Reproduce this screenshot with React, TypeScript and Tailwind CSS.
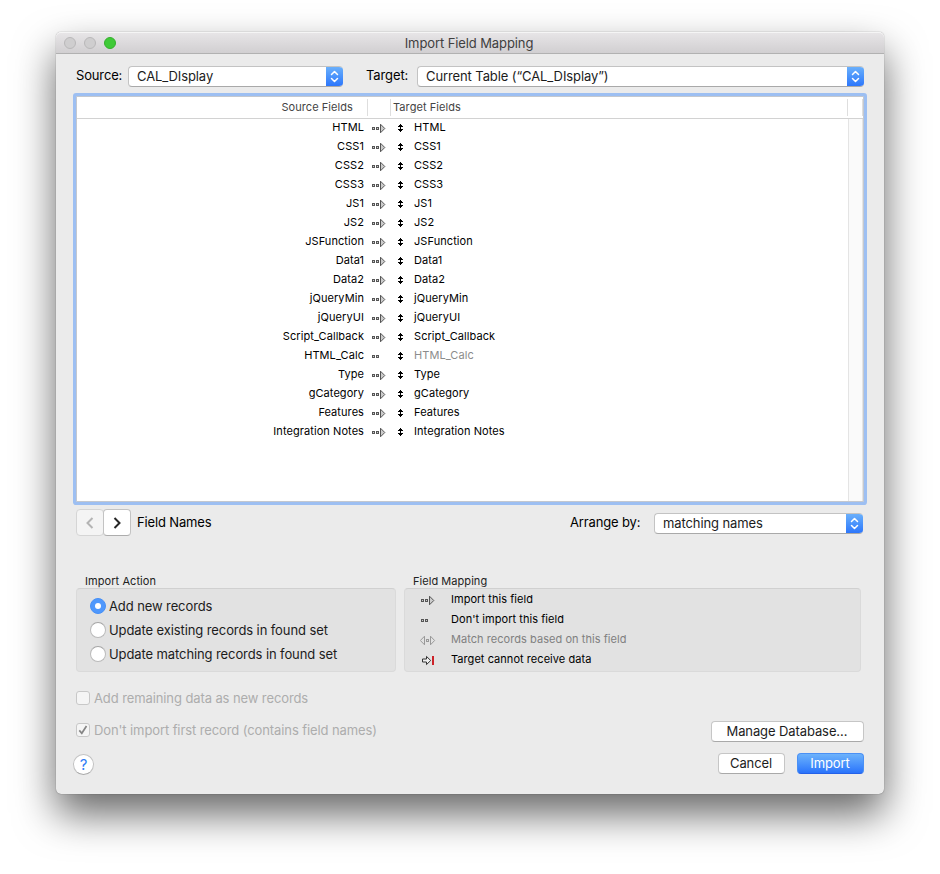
import clsx from "clsx";

type MappingKind = "import" | "skip" | "match" | "blocked";

const fields: { name: string; kind: MappingKind }[] = [
  { name: "HTML", kind: "import" },
  { name: "CSS1", kind: "import" },
  { name: "CSS2", kind: "import" },
  { name: "CSS3", kind: "import" },
  { name: "JS1", kind: "import" },
  { name: "JS2", kind: "import" },
  { name: "JSFunction", kind: "import" },
  { name: "Data1", kind: "import" },
  { name: "Data2", kind: "import" },
  { name: "jQueryMin", kind: "import" },
  { name: "jQueryUI", kind: "import" },
  { name: "Script_Callback", kind: "import" },
  { name: "HTML_Calc", kind: "skip" },
  { name: "Type", kind: "import" },
  { name: "gCategory", kind: "import" },
  { name: "Features", kind: "import" },
  { name: "Integration Notes", kind: "import" },
];

const legend: { label: string; kind: MappingKind; disabled?: boolean }[] = [
  { label: "Import this field", kind: "import" },
  { label: "Don't import this field", kind: "skip" },
  { label: "Match records based on this field", kind: "match", disabled: true },
  { label: "Target cannot receive data", kind: "blocked" },
];

const actions = [
  { label: "Add new records", checked: true },
  { label: "Update existing records in found set", checked: false },
  { label: "Update matching records in found set", checked: false },
];

function MappingIcon({ kind }: { kind: MappingKind }) {
  return (
    <svg width="16" height="11" viewBox="0 0 16 11" fill="none" className="block shrink-0">
      {(kind === "import" || kind === "skip") && (
        <g stroke="#555" fill="#ccc">
          <rect x="0.5" y="4.5" width="2" height="2" />
          <rect x="4.5" y="4.5" width="2" height="2" />
        </g>
      )}
      {kind === "import" && <path d="M8.5 1.2v8.6l4.3-4.3z" fill="#ccc" stroke="#555" />}
      {kind === "match" && (
        <g stroke="#999">
          <path d="M4.5 1.2v8.6L0.4 5.5z" />
          <rect x="6.5" y="4.5" width="2" height="2" />
          <path d="M10.5 1.2v8.6l4.1-4.3z" />
        </g>
      )}
      {kind === "blocked" && (
        <>
          <path d="M1.5 4h4V1.4l4.2 4.1-4.2 4.1V7h-4z" fill="#eee" stroke="#333" />
          <path d="M12 1v9" stroke="#cc2229" strokeWidth="2" />
        </>
      )}
    </svg>
  );
}

function SortHandle() {
  return (
    <svg width="5" height="8" viewBox="0 0 5 8" shapeRendering="crispEdges" className="block shrink-0">
      <path d="M2 0h1v1h1v1h1v1H3v2h2v1H4v1H3v1H2V7H1V6H0V5h2V3H0V2h1V1h1z" fill="#000" />
    </svg>
  );
}

function Select({ value, className }: { value: string; className?: string }) {
  return (
    <div
      className={clsx(
        "flex h-[21px] overflow-hidden rounded-[4px] border border-[#c3c3c3] border-b-[#a9a9a9] border-r-0 bg-white",
        className
      )}
    >
      <span className="flex-1 pl-2 leading-[19px] text-[#1c1c1c]">{value}</span>
      <span className="-my-px flex w-[17px] items-center justify-center bg-linear-to-b from-[#6db2fb] to-[#2a73fb]">
        <svg width="9" height="13" viewBox="0 0 9 13" fill="none" stroke="#fff" strokeWidth="1.5" strokeLinecap="round" strokeLinejoin="round">
          <path d="M1.5 4.5l3-3 3 3M1.5 8.5l3 3 3-3" />
        </svg>
      </span>
    </div>
  );
}

function PushButton({ label, primary, className }: { label: string; primary?: boolean; className?: string }) {
  return (
    <button
      className={clsx(
        "flex h-[21px] items-center justify-center rounded-[4px] border pb-[2px] pr-px",
        primary
          ? "border-[#4a90f5] border-b-[#2461e8] bg-linear-to-b from-[#6db2fb] to-[#2a73fb] text-white"
          : "border-[#c6c6c6] border-b-[#a9a9a9] bg-white text-[#1c1c1c]",
        className
      )}
    >
      {label}
    </button>
  );
}

function Checkbox({ label, checked }: { label: string; checked?: boolean }) {
  return (
    <div className="flex h-[14px] items-center gap-1 text-[#adadad]">
      <span className="flex size-[14px] items-center justify-center rounded-[3px] border border-[#c8c8c8] bg-[#f5f5f5]">
        {checked && (
          <svg width="10" height="10" viewBox="0 0 10 10" fill="none" stroke="#858585" strokeWidth="1.7">
            <path d="M1.3 5.4l2.5 2.9L8.5 1" />
          </svg>
        )}
      </span>
      <span>{label}</span>
    </div>
  );
}

export default function App() {
  return (
    <div className="h-[874px] w-[940px] overflow-hidden bg-white pl-14 pt-8 font-['Inter','Liberation_Sans',sans-serif] text-[13px] leading-4 tracking-[-0.1px] text-black">
      <div className="h-[762px] w-[828px] rounded-[5px] bg-[#ebebeb] shadow-[0_0_1px_rgba(0,0,0,0.6),0_20px_40px_rgba(0,0,0,0.6)]">
        <header className="relative flex h-[22px] items-center justify-center rounded-t-[5px] border-b border-[#b1b1b1] bg-linear-to-b from-[#e8e6e8] to-[#d1cfd1] text-[#404040] shadow-[inset_0_1px_0_#f5f5f5]">
          <div className="absolute left-2 top-[5px] flex gap-2">
            <span className="size-3 rounded-full border border-[#b9b8b9] bg-[#cfcecf]" />
            <span className="size-3 rounded-full border border-[#b9b8b9] bg-[#cfcecf]" />
            <span className="size-3 rounded-full border border-[#34b02c] bg-[#3fca37]" />
          </div>
          <h1 className="pr-[2px]">Import Field Mapping</h1>
        </header>

        <main className="px-5">
          <div className="flex pt-3">
            <span className="w-[52px] pt-px tracking-[-0.15px]">Source:</span>
            <Select value="CAL_DIsplay" className="w-[215px]" />
            <span className="ml-[23px] w-[51px] pt-px">Target:</span>
            <Select value="Current Table (“CAL_DIsplay”)" className="w-[447px]" />
          </div>

          {/* Field list */}
          <section className="mt-[9px] flex h-[406px] w-[788px] flex-col rounded-[1px] border border-[#c4c8cf] bg-white text-[11px] tracking-[0.07px] ring-3 ring-[#9dbff2]">
            <div className="flex h-[22px] border-b border-[#d2d2d2] leading-[20px] text-[#444]">
              <span className="w-[290px] pr-[14px] text-right">Source Fields</span>
              <span className="my-[2px] w-[24px] border-x border-[#dedede]" />
              <span className="flex-1 pl-[2px]">Target Fields</span>
              <span className="my-[2px] w-[16px] border-x border-[#dedede]" />
            </div>
            <div className="flex flex-1">
              <div className="-mt-px flex-1">
                {fields.map((field) => (
                  <div key={field.name} className="flex h-[19px] items-center">
                    <span className="-mt-[2px] w-[287px] text-right">{field.name}</span>
                    <span className="ml-[8px] mt-[2px]">
                      <MappingIcon kind={field.kind} />
                    </span>
                    <span className="ml-[10px] mt-px">
                      <SortHandle />
                    </span>
                    <span className={clsx("-mt-[2px] ml-[11px]", field.kind === "skip" && "text-[#8c8c8c]")}>
                      {field.name}
                    </span>
                  </div>
                ))}
              </div>
              <div className="w-[15px] border-x border-[#e4e4e4] bg-[#fafafa]" />
            </div>
          </section>

          <div className="mt-[7px] flex h-[27px] items-center">
            <span className="flex h-[27px] w-[28px] items-center justify-center rounded-[4px] border border-[#d5d5d5] bg-[#f4f4f4]">
              <svg width="8" height="12" viewBox="0 0 8 12" fill="none" stroke="#b4b4b4" strokeWidth="2">
                <path d="M6.5 1l-5 5 5 5" />
              </svg>
            </span>
            <span className="-ml-px flex h-[27px] w-[28px] items-center justify-center rounded-[4px] border border-[#c3c3c3] border-b-[#adadad] bg-white">
              <svg width="8" height="12" viewBox="0 0 8 12" fill="none" stroke="#262626" strokeWidth="2">
                <path d="M1.5 1l5 5-5 5" />
              </svg>
            </span>
            <span className="ml-[6px] w-[433px] pb-[2px] tracking-[-0.15px]">Field Names</span>
            <span className="w-[84px] pb-[2px] tracking-[-0.15px]">Arrange by:</span>
            <Select value="matching names" className="mt-[2px] w-[209px]" />
          </div>

          <div className="mt-[37px] flex gap-2">
            <section className="w-[320px]">
              <h2 className="h-[15px] pl-[9px] text-[11px] tracking-[0.07px] text-[#222]">Import Action</h2>
              <div className="flex h-[84px] flex-col gap-2 rounded-[4px] border border-[#dadada] border-t-[#d0d0d0] bg-[#e2e2e2] pl-[13px] pt-[9px] text-[#1c1c1c]">
                {actions.map((action) => (
                  <div key={action.label} className="flex items-center gap-[3px]">
                    <span
                      className={clsx(
                        "flex size-4 items-center justify-center rounded-full border",
                        action.checked ? "border-[#4790f7] bg-[#4f98fc]" : "border-[#bababa] border-t-[#a5a5a5] bg-white"
                      )}
                    >
                      {action.checked && <span className="size-[6px] rounded-full bg-white" />}
                    </span>
                    <span>{action.label}</span>
                  </div>
                ))}
              </div>
            </section>
            <section className="w-[457px]">
              <h2 className="h-[15px] pl-[9px] text-[11px] tracking-[0.05px] text-[#222]">Field Mapping</h2>
              <div className="h-[84px] rounded-[4px] border border-[#dadada] border-t-[#d0d0d0] bg-[#e2e2e2] text-[11px] tracking-[0.05px]">
                {legend.map((item) => (
                  <div key={item.kind} className="flex h-5 items-center pl-[15px]">
                    <span className={clsx("mt-[3px] w-[31px]", item.kind !== "match" && "pl-px")}>
                      <MappingIcon kind={item.kind} />
                    </span>
                    <span className={clsx(item.disabled && "text-[#808080]")}>{item.label}</span>
                  </div>
                ))}
              </div>
            </section>
          </div>

          <footer className="flex justify-between">
            <div className="pt-[19px]">
              <Checkbox label="Add remaining data as new records" />
              <div className="mt-[18px]">
                <Checkbox label="Don't import first record (contains field names)" checked />
              </div>
              <div className="-ml-[3px] mt-[17px] flex size-[21px] items-center justify-center rounded-full border border-[#c3c3c3] border-b-[#a9a9a9] bg-white text-[15px] text-[#2f7cf6]">
                ?
              </div>
            </div>
            <div className="flex flex-col items-end pt-[49px]">
              <PushButton label="Manage Database…" className="w-[153px]" />
              <div className="mt-[11px] flex gap-3">
                <PushButton label="Cancel" className="w-[67px]" />
                <PushButton label="Import" primary className="w-[67px]" />
              </div>
            </div>
          </footer>
        </main>
      </div>
    </div>
  );
}
